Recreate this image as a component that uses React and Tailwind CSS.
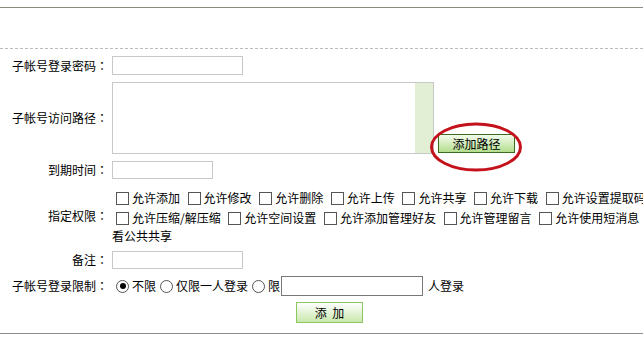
import React from 'react';

const font = { fontFamily: '"Noto Sans CJK SC", "Noto Sans", sans-serif' };
const colonFont = { fontFamily: '"Noto Sans CJK TC", "Noto Sans CJK SC", sans-serif' };

function Box() {
  return <span className="inline-block w-[13px] h-[13px] border border-[#555] bg-white ml-[4px] mr-[3px] shrink-0" />;
}

function Check({ text }) {
  return (
    <span className="inline-flex items-center mr-[3.6px]">
      <Box />
      <span>{text}</span>
    </span>
  );
}

function Radio({ checked, text }) {
  return (
    <span className="inline-flex items-center">
      <span className="w-[13px] h-[13px] rounded-full border border-[#555] bg-white ml-[4px] mr-[3px] flex items-center justify-center">
        {checked && <span className="w-[6px] h-[6px] rounded-full bg-black" />}
      </span>
      <span>{text}</span>
    </span>
  );
}

function Label({ children }) {
  return (
    <div className="w-[108px] text-right shrink-0 whitespace-nowrap">
      {children}
      <span style={colonFont}>：</span>
    </div>
  );
}

export default function App() {
  return (
    <div className="w-[643px] h-[340px] overflow-hidden bg-white text-[12px] leading-[16px] text-black relative" style={font}>
      <div className="pt-[7px]">
        <div className="border-t border-[#8c8c7c] h-[41px]" />
        <div className="border-t border-dashed border-[#bbbbbb]" />
      </div>

      {/* 登录密码 */}
      <div className="flex items-center mt-[7px]">
        <Label>子帐号登录密码</Label>
        <div className="ml-[4px] w-[131px] h-[19px] border border-[#c8c8c8] bg-white" />
      </div>

      {/* 访问路径 */}
      <div className="flex items-center mt-[7px]">
        <Label>子帐号访问路径</Label>
        <div className="ml-[4px] flex items-end">
          <div className="w-[322px] h-[72px] border border-[#c8c8c8] flex justify-end">
            <div className="w-[18px] h-full bg-[#e2efd5]" />
          </div>
          <div className="relative ml-[4px] mb-[1px]">
            <button className="w-[77px] h-[19px] border border-[#3d6b22] bg-gradient-to-b from-[#f3fbec] to-[#b3dd8c] text-[12px] leading-[16px] text-black" style={font}>
              添加路径
            </button>
            <svg className="absolute left-[-9px] top-[-12px]" width="94" height="50" viewBox="0 0 94 50">
              <ellipse cx="47" cy="25" rx="44.5" ry="23" fill="none" stroke="#c4121c" strokeWidth="3" />
            </svg>
          </div>
        </div>
      </div>

      {/* 到期时间 */}
      <div className="flex items-center mt-[7px]">
        <Label>到期时间</Label>
        <div className="ml-[4px] w-[101px] h-[18px] border border-[#c8c8c8] bg-white" />
      </div>

      {/* 指定权限 */}
      <div className="flex items-center mt-[9px]">
        <Label>指定权限</Label>
        <div className="ml-[4px] whitespace-nowrap">
          <div className="h-[20px] flex items-center">
            <Check text="允许添加" />
            <Check text="允许修改" />
            <Check text="允许删除" />
            <Check text="允许上传" />
            <Check text="允许共享" />
            <Check text="允许下载" />
            <Check text="允许设置提取码" />
          </div>
          <div className="h-[20px] flex items-center">
            <Check text="允许压缩/解压缩" />
            <Check text="允许空间设置" />
            <Check text="允许添加管理好友" />
            <Check text="允许管理留言" />
            <Check text="允许使用短消息" />
            <Check text="允许查" />
          </div>
          <div className="h-[16px] flex items-center">看公共共享</div>
        </div>
      </div>

      {/* 备注 */}
      <div className="flex items-center mt-[7px]">
        <Label>备注</Label>
        <div className="ml-[4px] w-[131px] h-[18px] border border-[#c8c8c8] bg-white" />
      </div>

      {/* 登录限制 */}
      <div className="flex items-center mt-[7px]">
        <Label>子帐号登录限制</Label>
        <div className="ml-[4px] flex items-center whitespace-nowrap">
          <Radio checked text="不限" />
          <Radio text="仅限一人登录" />
          <Radio text="限" />
          <div className="ml-[1px] w-[142px] h-[20px] border border-[#777] bg-white" />
          <span className="ml-[5px]">人登录</span>
        </div>
      </div>

      {/* 提交 */}
      <div className="flex mt-[6px] pl-[296px]">
        <button className="w-[67px] h-[21px] border border-[#8cc860] bg-gradient-to-b from-[#ffffff] to-[#c9e8ad] text-[12px] leading-[16px] text-black" style={font}>
          添&nbsp;&nbsp;加
        </button>
      </div>

      <div className="mt-[10px] border-t border-[#8c8c8c]" />
    </div>
  );
}
